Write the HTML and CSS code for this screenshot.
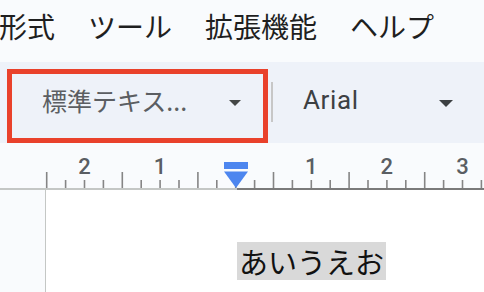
FILE: index.html
```html
<!DOCTYPE html>
<html lang="ja">
<head>
<meta charset="utf-8">
<link rel="stylesheet" href="styles.css">
</head>
<body>
<div class="app">
  <div class="menubar">
    <span class="menu-item">形式</span>
    <span class="menu-item">ツール</span>
    <span class="menu-item">拡張機能</span>
    <span class="menu-item">ヘルプ</span>
  </div>
  <div class="toolbar">
    <div class="style-select">
      <span class="style-label">標準テキス...</span>
      <span class="caret"></span>
    </div>
    <div class="separator"></div>
    <div class="font-select">
      <span class="font-label">Arial</span>
      <span class="caret dark"></span>
    </div>
  </div>
  <div class="ruler">
    <svg width="484" height="47" viewBox="0 0 484 47" xmlns="http://www.w3.org/2000/svg">
      <rect x="0" y="45" width="237" height="2" fill="#c4c7c5"/>
      <rect x="237" y="45" width="247" height="2" fill="#7a7a7a"/>
      <g stroke="#858585" stroke-width="1.6">
        <line x1="46.7" y1="29" x2="46.7" y2="45"/>
        <line x1="65.6" y1="37" x2="65.6" y2="45"/>
        <line x1="84.5" y1="37" x2="84.5" y2="45"/>
        <line x1="103.4" y1="37" x2="103.4" y2="45"/>
        <line x1="122.3" y1="29" x2="122.3" y2="45"/>
        <line x1="141.2" y1="37" x2="141.2" y2="45"/>
        <line x1="160.1" y1="37" x2="160.1" y2="45"/>
        <line x1="179" y1="37" x2="179" y2="45"/>
        <line x1="197.9" y1="29" x2="197.9" y2="45"/>
        <line x1="216.8" y1="37" x2="216.8" y2="45"/>
        <line x1="235.7" y1="37" x2="235.7" y2="45"/>
        <line x1="254.6" y1="37" x2="254.6" y2="45"/>
        <line x1="273.5" y1="29" x2="273.5" y2="45"/>
        <line x1="292.4" y1="37" x2="292.4" y2="45"/>
        <line x1="311.3" y1="37" x2="311.3" y2="45"/>
        <line x1="330.2" y1="37" x2="330.2" y2="45"/>
        <line x1="349.1" y1="29" x2="349.1" y2="45"/>
        <line x1="368" y1="37" x2="368" y2="45"/>
        <line x1="386.9" y1="37" x2="386.9" y2="45"/>
        <line x1="405.8" y1="37" x2="405.8" y2="45"/>
        <line x1="424.7" y1="29" x2="424.7" y2="45"/>
        <line x1="443.6" y1="37" x2="443.6" y2="45"/>
        <line x1="462.5" y1="37" x2="462.5" y2="45"/>
        <line x1="481.4" y1="37" x2="481.4" y2="45"/>
      </g>
      <rect x="224" y="19" width="24" height="7" fill="#4d86ef"/>
      <polygon points="224,28.6 248,28.6 236,45" fill="#4d86ef"/>
    </svg>
    <div class="ruler-nums">
      <span class="num">2</span>
      <span class="num">1</span>
      <span class="num"></span>
      <span class="num">1</span>
      <span class="num">2</span>
      <span class="num">3</span>
    </div>
  </div>
  <div class="workspace">
    <div class="gutter"></div>
    <div class="page">
      <span class="selected-text">あいうえお</span>
    </div>
  </div>
</div>
</body>
</html>
```

FILE: styles.css
```css
html, body {
  margin: 0;
  padding: 0;
}
body {
  width: 484px;
  height: 292px;
  overflow: hidden;
  background: #f9fbfd;
  font-family: "Noto Sans CJK JP", "Noto Sans", sans-serif;
}
.app {
  display: flex;
  flex-direction: column;
  width: 484px;
  height: 292px;
}
.menubar {
  height: 62px;
  flex-shrink: 0;
  display: flex;
  gap: 33px;
  margin-left: -1px;
  font-size: 28px;
  line-height: 52px;
  color: #1f1f1f;
  white-space: nowrap;
}
.toolbar {
  height: 81px;
  flex-shrink: 0;
  box-sizing: border-box;
  padding-top: 7px;
  padding-left: 7px;
  background: #eef2f9;
  display: flex;
  align-items: flex-start;
}
.style-select {
  width: 261px;
  height: 74px;
  box-sizing: border-box;
  border: 5px solid #e9412b;
  display: flex;
  align-items: center;
  padding-left: 30px;
  padding-right: 22px;
  padding-bottom: 13px;
}
.style-label {
  flex: 1;
  font-size: 25px;
  color: #5b5e62;
  white-space: nowrap;
  line-height: 30px;
}
.caret {
  width: 0;
  height: 0;
  border-left: 6.5px solid transparent;
  border-right: 6.5px solid transparent;
  border-top: 6px solid #444746;
  margin-top: 7px;
}
.caret.dark {
  border-left-width: 7px;
  border-right-width: 7px;
  border-top: 7px solid #3c4043;
}
.separator {
  width: 2px;
  height: 40px;
  margin-top: 13px;
  margin-left: 3px;
  background: #c7c7c7;
}
.font-select {
  height: 74px;
  box-sizing: border-box;
  display: flex;
  align-items: center;
  padding-left: 30px;
  padding-bottom: 13px;
  width: 180px;
}
.font-label {
  flex: 1;
  font-family: Roboto, "Liberation Sans", sans-serif;
  font-size: 26px;
  color: #3c4043;
  line-height: 30px;
  letter-spacing: 0.6px;
}
.ruler {
  position: relative;
  height: 47px;
  flex-shrink: 0;
}
.ruler svg {
  display: block;
}
.ruler-nums {
  position: absolute;
  top: 12px;
  left: 46.7px;
  display: flex;
  font-family: Roboto, "Liberation Sans", sans-serif;
  font-size: 22px;
  font-weight: 500;
  line-height: 24px;
  color: #5a5e63;
}
.num {
  width: 75.6px;
  text-align: center;
}
.workspace {
  flex: 1;
  display: flex;
}
.gutter {
  width: 45px;
  border-right: 1.5px solid #c4c7c5;
  background: #f9fbfd;
}
.page {
  flex: 1;
  background: #ffffff;
  padding-top: 52px;
  padding-left: 191px;
}
.selected-text {
  display: inline-block;
  background: #d9d9d9;
  font-size: 29px;
  line-height: 38px;
  color: #111111;
  padding: 0 2px 0 2px;
}
```
